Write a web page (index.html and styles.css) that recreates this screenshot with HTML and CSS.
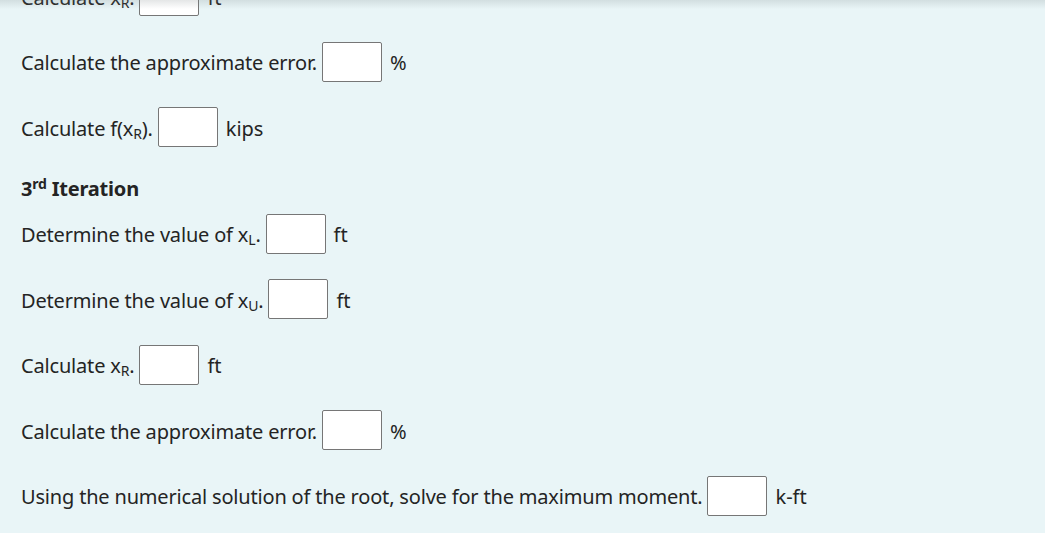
FILE: index.html
```html
<!DOCTYPE html>
<html>
<head>
<meta charset="utf-8">
<link rel="stylesheet" href="styles.css">
</head>
<body>
<div class="shade"></div>
<main class="content">
  <div class="row first"><span class="label">Calculate x<sub>R</sub>.</span><span class="box"></span><span class="unit">ft</span></div>
  <div class="row"><span class="label">Calculate the approximate error.</span><span class="box"></span><span class="unit">%</span></div>
  <div class="row"><span class="label">Calculate f(x<sub>R</sub>).</span><span class="box"></span><span class="unit">kips</span></div>
  <h3 class="heading">3<sup>rd</sup> Iteration</h3>
  <div class="row"><span class="label">Determine the value of x<sub>L</sub>.</span><span class="box"></span><span class="unit">ft</span></div>
  <div class="row"><span class="label">Determine the value of x<sub>U</sub>.</span><span class="box"></span><span class="unit">ft</span></div>
  <div class="row"><span class="label">Calculate x<sub>R</sub>.</span><span class="box"></span><span class="unit">ft</span></div>
  <div class="row"><span class="label">Calculate the approximate error.</span><span class="box"></span><span class="unit">%</span></div>
  <div class="row"><span class="label">Using the numerical solution of the root, solve for the maximum moment.</span><span class="box"></span><span class="unit">k-ft</span></div>
</main>
</body>
</html>
```
FILE: styles.css
```css
html, body {
  margin: 0;
  padding: 0;
  background: #e9f5f7;
  overflow: hidden;
}
body {
  font-family: "Noto Sans", "Open Sans", sans-serif;
  font-size: 20px;
  color: #242424;
  width: 1045px;
  height: 533px;
  position: relative;
}
.shade {
  position: absolute;
  left: 0;
  top: 0;
  width: 100%;
  height: 9px;
  background: linear-gradient(to bottom, rgba(120, 130, 132, 0.2), rgba(120, 130, 132, 0));
  z-index: 2;
}
.content {
  display: flex;
  flex-direction: column;
  padding-left: 21px;
}
.row {
  display: flex;
  align-items: center;
  height: 40px;
  margin-bottom: 25.5px;
}
.row.first {
  margin-top: -24px;
}
.label {
  letter-spacing: -0.18px;
  white-space: nowrap;
  position: relative;
  top: 1px;
}
sub {
  font-size: 14px;
  vertical-align: -3px;
  line-height: 0;
}
sup {
  font-size: 14px;
  vertical-align: 7px;
  line-height: 0;
}
.box {
  box-sizing: border-box;
  width: 60px;
  height: 40px;
  margin-left: 5px;
  background: #fff;
  border: 1px solid #767676;
  border-radius: 2px;
}
.unit {
  margin-left: 8px;
  position: relative;
  top: 1px;
}
.heading {
  margin: 2px 0 11px;
  height: 28px;
  line-height: 28px;
  font-size: 20px;
  font-weight: 700;
  letter-spacing: -0.2px;
}
```
